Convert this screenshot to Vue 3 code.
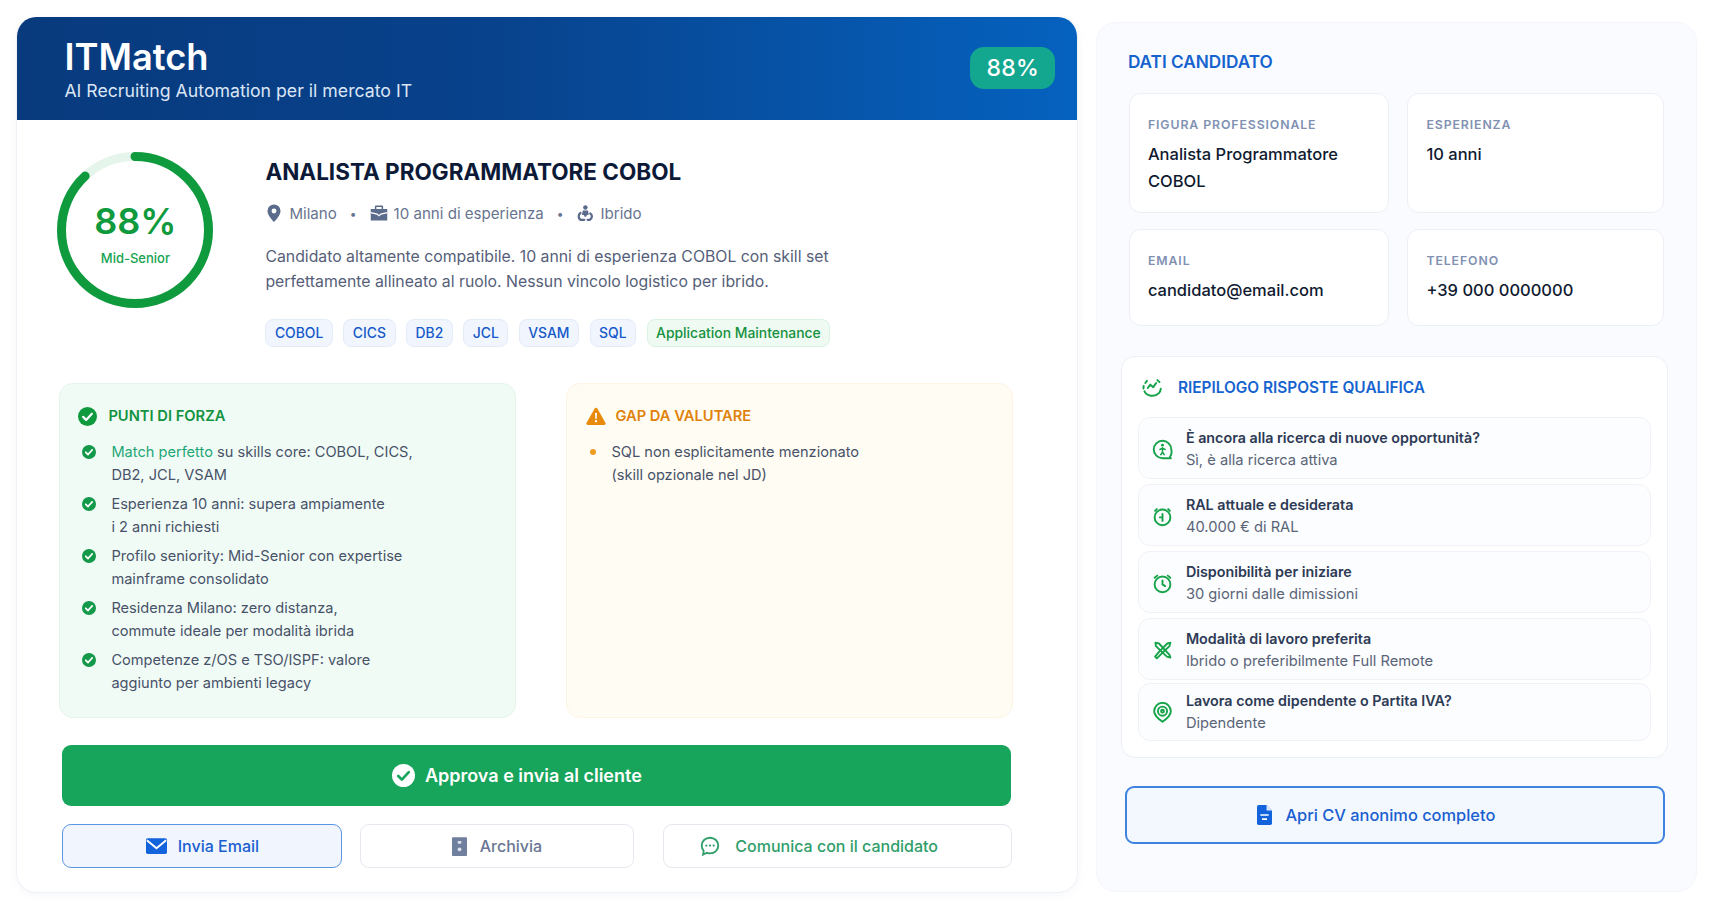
<script setup>
const tags = ['COBOL', 'CICS', 'DB2', 'JCL', 'VSAM', 'SQL']
const strengths = [
  { lead: 'Match perfetto', lines: [' su skills core: COBOL, CICS,', 'DB2, JCL, VSAM'] },
  { lead: '', lines: ['Esperienza 10 anni: supera ampiamente', 'i 2 anni richiesti'] },
  { lead: '', lines: ['Profilo seniority: Mid-Senior con expertise', 'mainframe consolidato'] },
  { lead: '', lines: ['Residenza Milano: zero distanza,', 'commute ideale per modalità ibrida'] },
  { lead: '', lines: ['Competenze z/OS e TSO/ISPF: valore', 'aggiunto per ambienti legacy'] }
]
const fields = [
  { label: 'FIGURA PROFESSIONALE', value: 'Analista Programmatore COBOL' },
  { label: 'ESPERIENZA', value: '10 anni' },
  { label: 'EMAIL', value: 'candidato@email.com' },
  { label: 'TELEFONO', value: '+39 000 0000000' }
]
const answers = [
  { icon: 'search', q: 'È ancora alla ricerca di nuove opportunità?', a: 'Sì, è alla ricerca attiva' },
  { icon: 'money', q: 'RAL attuale e desiderata', a: '40.000 € di RAL' },
  { icon: 'alarm', q: 'Disponibilità per iniziare', a: '30 giorni dalle dimissioni' },
  { icon: 'cross', q: 'Modalità di lavoro preferita', a: 'Ibrido o preferibilmente Full Remote' },
  { icon: 'target', q: 'Lavora come dipendente o Partita IVA?', a: 'Dipendente' }
]
</script>

<template>
  <div class="page">
    <section class="main">
      <header class="banner">
        <div>
          <h1 class="brand">ITMatch</h1>
          <p class="tagline">AI Recruiting Automation per il mercato IT</p>
        </div>
        <div class="badge">88%</div>
      </header>

      <div class="body">
        <div class="hero">
          <div class="ring">
            <svg viewBox="0 0 156 156" class="ring-svg">
              <circle cx="78" cy="78" r="73.500" fill="none" stroke="#e6f5ec" stroke-width="9" />
              <circle cx="78" cy="78" r="73.500" fill="none" stroke="#0f9a3e" stroke-width="9" stroke-linecap="round"
                stroke-dasharray="406.400 462" transform="rotate(-90 78 78)" />
            </svg>
            <div class="ring-text">
              <div class="ring-value">88%</div>
              <div class="ring-label">Mid-Senior</div>
            </div>
          </div>
          <div class="summary">
            <h2 class="role">ANALISTA PROGRAMMATORE COBOL</h2>
            <div class="meta">
              <svg class="meta-icon" viewBox="3 1 18 22"><path fill="#5a6b8c" fill-rule="evenodd" d="M12 1.500a8 8 0 0 0-8 8c0 5.600 8 13.500 8 13.500s8-7.900 8-13.500a8 8 0 0 0-8-8zm0 5a3 3 0 1 1 0 6 3 3 0 0 1 0-6z"/></svg>
              <span>Milano</span>
              <span class="dot">•</span>
              <svg class="meta-icon" viewBox="0 0 24 24"><path fill="#5a6b8c" d="M8 2h8a1.500 1.500 0 0 1 1.500 1.500V6.500H23v15.500H1V6.500h5.500V3.500A1.500 1.500 0 0 1 8 2zm.5 2v2.500h7V4z"/><path fill="none" stroke="#fff" stroke-width="1.700" d="M1 11.500l8.500 2 2.500 2 2.500-2 8.500-2"/></svg>
              <span>10 anni di esperienza</span>
              <span class="dot">•</span>
              <svg class="meta-icon" viewBox="0 0 24 24"><circle cx="12.500" cy="4.500" r="3" fill="#5a6b8c"/><path fill="#5a6b8c" d="M9 8.500h7l1 6h-2.500l-1 2.500h-2l-1-2.500H8z"/><path fill="none" stroke="#5a6b8c" stroke-width="3" stroke-linecap="round" d="M6 12c-3 2-3.500 6.500 0 9h5M19 12.500c3 2 3 6.500-.5 8.500h-3"/></svg>
              <span>Ibrido</span>
            </div>
            <p class="desc">Candidato altamente compatibile. 10 anni di esperienza COBOL con skill set<br>perfettamente allineato al ruolo. Nessun vincolo logistico per ibrido.</p>
            <div class="tags">
              <span v-for="t in tags" :key="t" class="tag">{{ t }}</span>
              <span class="tag tag-green">Application Maintenance</span>
            </div>
          </div>
        </div>

        <div class="panels">
          <div class="panel panel-green">
            <div class="panel-head head-green">
              <svg class="head-icon" viewBox="0 0 24 24"><circle cx="12" cy="12" r="12" fill="#0f9a3e"/><path d="M6.500 12.500l3.800 3.800 7.200-7.800" fill="none" stroke="#fff" stroke-width="2.800" stroke-linecap="round" stroke-linejoin="round"/></svg>
              PUNTI DI FORZA
            </div>
            <ul class="items">
              <li v-for="(s, i) in strengths" :key="i" class="item">
                <svg class="item-check" viewBox="0 0 24 24"><circle cx="12" cy="12" r="12" fill="#12994a"/><path d="M6.500 12.500l3.800 3.800 7.200-7.800" fill="none" stroke="#fff" stroke-width="3" stroke-linecap="round" stroke-linejoin="round"/></svg>
                <div><span v-if="s.lead" class="lead">{{ s.lead }}</span>{{ s.lines[0] }}<br>{{ s.lines[1] }}</div>
              </li>
            </ul>
          </div>
          <div class="panel panel-amber">
            <div class="panel-head head-amber">
              <svg class="warn-icon" viewBox="0 0 24 24"><path fill="#e88a0c" d="M12 2a1.800 1.800 0 0 1 1.600.900l9.700 17.200a1.800 1.800 0 0 1-1.600 2.700H2.300a1.800 1.800 0 0 1-1.600-2.700L10.400 2.900A1.800 1.800 0 0 1 12 2z"/><path fill="#fff" d="M10.800 8.500h2.400l-.4 7h-1.600z"/><circle cx="12" cy="18.300" r="1.400" fill="#fff"/></svg>
              GAP DA VALUTARE
            </div>
            <div class="gap-item">
              <span class="gap-dot"></span>
              <div>SQL non esplicitamente menzionato<br>(skill opzionale nel JD)</div>
            </div>
          </div>
        </div>

        <button class="approve">
          <svg class="approve-icon" viewBox="0 0 24 24"><circle cx="12" cy="12" r="12" fill="#fff"/><path d="M6.500 12.500l3.800 3.800 7.200-7.800" fill="none" stroke="#17a55c" stroke-width="2.800" stroke-linecap="round" stroke-linejoin="round"/></svg>
          Approva e invia al cliente
        </button>

        <div class="actions">
          <button class="action action-email">
            <svg class="mail-icon" viewBox="0 0 24 18"><rect width="24" height="18" rx="2" fill="#1263dc"/><path d="M1 2.500l11 9 11-9" fill="none" stroke="#fff" stroke-width="2.200"/></svg>
            Invia Email
          </button>
          <button class="action action-archive">
            <svg class="archive-icon" viewBox="0 0 16 20"><rect width="16" height="20" rx="1" fill="#6f7f9d"/><rect x="6" y="4" width="4" height="3" rx="1" fill="#dde3ee"/><circle cx="8" cy="13" r="2" fill="#dde3ee"/></svg>
            Archivia
          </button>
          <button class="action action-chat">
            <svg class="chat-icon" viewBox="0 0 24 24"><path d="M12 3c5.200 0 9 3.700 9 8.500S17.200 20 12 20c-1.300 0-2.500-.2-3.500-.6L4.500 21.500l.6-4.200C3.800 15.800 3 13.800 3 11.500 3 6.700 6.800 3 12 3z" fill="none" stroke="#2f9e6a" stroke-width="2"/><circle cx="8" cy="11.500" r="1.200" fill="#2f9e6a"/><circle cx="12" cy="11.500" r="1.200" fill="#2f9e6a"/><circle cx="16" cy="11.500" r="1.200" fill="#2f9e6a"/></svg>
            Comunica con il candidato
          </button>
        </div>
      </div>
    </section>

    <aside class="side">
      <h3 class="side-title">DATI CANDIDATO</h3>
      <div class="fields">
        <div v-for="f in fields" :key="f.label" class="field">
          <div class="field-label">{{ f.label }}</div>
          <div class="field-value">{{ f.value }}</div>
        </div>
      </div>

      <div class="summary-box">
        <div class="summary-head">
          <svg class="summary-icon" viewBox="0 0 24 24" fill="none" stroke="#16a34a" stroke-width="2.400" stroke-linecap="round" stroke-linejoin="round"><path d="M2 9.500l-.3 3M3 16c2.500 5.500 12 7.500 17 2.500 1.500-1.500 2.300-3.500 2.500-5.500"/><path d="M7 12l3-4 3.500 3L17 6"/><path d="M18.500 2.500l2.500 2.500M4 6l2-2.500"/></svg>
          <span>RIEPILOGO RISPOSTE QUALIFICA</span>
        </div>
        <div class="answers">
          <div v-for="a in answers" :key="a.q" class="answer">
            <svg class="answer-icon" viewBox="0 0 24 24" fill="none" stroke="#16a34a" stroke-width="2.200" stroke-linecap="round" stroke-linejoin="round">
              <template v-if="a.icon === 'search'">
                <path d="M20.500 20.500l1 1.500h-9.500a10 10 0 1 1 10-10 10 10 0 0 1-1.500 8.500z"/>
                <circle cx="12" cy="7" r="1.700" fill="#16a34a" stroke="none"/>
                <path d="M12 10v5M9 12l3-1.500 3 1.500M10 18l2-3 2 3" stroke-width="1.700"/>
              </template>
              <template v-else-if="a.icon === 'money'">
                <circle cx="12" cy="13" r="9"/>
                <path d="M12 9v8M9 13h3M3.500 5.500l2-2M20.500 5.500l-2-2"/>
              </template>
              <template v-else-if="a.icon === 'alarm'">
                <circle cx="12" cy="13" r="9"/>
                <path d="M12 8.500V13l3 2M3 5.500L6 3M21 5.500L18 3"/>
              </template>
              <template v-else-if="a.icon === 'cross'">
                <path d="M4 3l4 1 12 13 1 3-4-1L4.500 7z"/>
                <path d="M21 3l-3.500 1L8.500 13l-5 6 2 2 5.500-5.500L20 7z"/>
              </template>
              <template v-else>
                <path d="M12 22.500s-9.500-6.500-9.500-12a9.500 9.500 0 0 1 19 0c0 5.500-9.500 12-9.500 12z"/>
                <circle cx="12" cy="10.500" r="5.200"/>
                <circle cx="12" cy="10.500" r="1.600"/>
              </template>
            </svg>
            <div>
              <div class="answer-q">{{ a.q }}</div>
              <div class="answer-a">{{ a.a }}</div>
            </div>
          </div>
        </div>
      </div>

      <button class="cv">
        <svg class="cv-icon" viewBox="0 0 18 24"><path fill="#1263dc" d="M2 0h9.500L18 6.500V22a2 2 0 0 1-2 2H2a2 2 0 0 1-2-2V2a2 2 0 0 1 2-2z"/><path fill="#fff" d="M11.500 0v6.500H18z" opacity=".85"/><path stroke="#fff" stroke-width="2" d="M4 12h10M6 17h6"/></svg>
        Apri CV anonimo completo
      </button>
    </aside>
  </div>
</template>

<style scoped>
.page {
  width: 1717px;
  height: 916px;
  box-sizing: border-box;
  padding: 17px 0 23.500px 16.400px;
  display: flex;
  gap: 17.500px;
  font-family: Inter, "Liberation Sans", sans-serif;
  background: #fff;
  overflow: hidden;
}
h1, h2, h3, p, ul { margin: 0; padding: 0; }
ul { list-style: none; }
button { font-family: inherit; cursor: pointer; }

.main {
  width: 1062px;
  flex: none;
  box-sizing: border-box;
  border: 1px solid #eef1f6;
  border-top: 0;
  border-radius: 20px;
  background: #fff;
  box-shadow: 0 2px 10px rgba(30, 60, 120, 0.04);
  overflow: hidden;
}
.banner {
  height: 103px;
  box-sizing: border-box;
  padding: 20px 22px 0 47px;
  background: linear-gradient(90deg, #083a7d 0%, #08428c 45%, #0562bf 100%);
  color: #fff;
  display: flex;
  justify-content: space-between;
  align-items: flex-start;
}
.brand { font-size: 36.300px; line-height: 40px; font-weight: 600; letter-spacing: 0; }
.tagline { font-size: 17.700px; line-height: 24px; color: #dbe6f5; margin-top: 2px; }
.badge {
  margin-top: 10px;
  width: 85px;
  height: 42px;
  border-radius: 14px;
  background: #12a78e;
  display: flex;
  align-items: center;
  justify-content: center;
  font-size: 23px;
  font-weight: 500;
  letter-spacing: 0.3px;
}

.body { padding: 32px 0 0 40px; }
.hero { display: flex; gap: 52px; }
.ring { position: relative; width: 156px; height: 156px; flex: none; }
.ring-svg { width: 156px; height: 156px; display: block; }
.ring-text {
  position: absolute;
  inset: 0;
  box-sizing: border-box;
  padding-top: 8px;
  display: flex;
  flex-direction: column;
  align-items: center;
  justify-content: center;
}
.ring-value { font-size: 36px; line-height: 40px; font-weight: 600; color: #0f9a3e; }
.ring-label { font-size: 13px; line-height: 18px; font-weight: 500; color: #15a34f; margin-top: 8px; }

.summary { padding-top: 5px; }
.role { font-size: 22.500px; line-height: 30px; font-weight: 700; color: #0c1a38; }
.meta {
  display: flex;
  align-items: center;
  margin-top: 14px;
  height: 24px;
  font-size: 15.100px;
  color: #67748f;
  gap: 6px;
}
.meta-icon { width: 18px; height: 18px; flex: none; }
.dot { margin: 0 7px; font-size: 12px; color: #67748f; }
.desc { margin-top: 19px; font-size: 15.800px; line-height: 25.200px; color: #556078; }
.tags { display: flex; gap: 10.500px; margin-top: 25px; }
.tag {
  height: 28px;
  box-sizing: border-box;
  padding: 0 8.500px;
  display: flex;
  align-items: center;
  border: 1px solid #e4ecf8;
  border-radius: 8px;
  background: #f1f6fe;
  color: #1659c9;
  font-size: 13.900px;
  font-weight: 500;
}
.tag-green { background: #eefaf2; border-color: #dcf3e3; color: #15913f; }

.panels {
  display: grid;
  grid-template-columns: 457px 447px;
  gap: 50px;
  margin: 36px 0 0 2px;
}
.panel { height: 335px; box-sizing: border-box; border-radius: 14px; padding: 22px 0 0 18px; }
.panel-green { background: #f1fbf6; border: 1px solid #e3f5ea; }
.panel-amber { background: #fffcf3; border: 1px solid #fdf5e4; padding-left: 19px; }
.panel-head {
  display: flex;
  align-items: center;
  font-size: 14.700px;
  line-height: 20px;
  font-weight: 600;
}
.head-green { color: #12933f; gap: 11px; }
.head-amber { color: #e0820c; gap: 9px; }
.head-icon { width: 19px; height: 19px; }
.warn-icon { width: 20px; height: 20px; }
.items { margin-top: 15px; padding-left: 4px; }
.item {
  display: flex;
  gap: 15px;
  font-size: 14.600px;
  line-height: 22.600px;
  color: #475268;
  margin-bottom: 6.800px;
}
.item-check { width: 14px; height: 14px; flex: none; margin-top: 4px; }
.lead { color: #1fa777; }
.gap-item {
  display: flex;
  gap: 15px;
  margin-top: 15px;
  font-size: 14.600px;
  line-height: 22.600px;
  color: #475268;
}
.gap-dot { width: 6px; height: 6px; border-radius: 50%; background: #ee9c20; margin-top: 8px; margin-left: 4px; flex: none; }

.approve {
  display: flex;
  align-items: center;
  justify-content: center;
  gap: 10px;
  width: 949px;
  height: 60.500px;
  box-sizing: border-box;
  padding: 0 40px 0 0;
  margin: 27px 0 0 5px;
  border: 0;
  border-radius: 9px;
  background: #17a55c;
  color: #fff;
  font-size: 18px;
  font-weight: 600;
}
.approve-icon { width: 23px; height: 23px; }
.actions {
  display: flex;
  gap: 18px;
  margin: 18.500px 0 0 5px;
  width: 949px;
}
.action {
  height: 44px;
  box-sizing: border-box;
  display: flex;
  align-items: center;
  justify-content: center;
  gap: 13px;
  border-radius: 9px;
  font-size: 16px;
  font-weight: 500;
  background: #fff;
  border: 1.500px solid #e5e8ef;
  flex: none;
}
.action-email { width: 280px; background: #f1f6fe; border-color: #5b95e6; color: #1a5fd0; gap: 11px; }
.action-archive { width: 274px; color: #6a7694; padding-left: 5px; }
.action-chat { width: 348.500px; margin-left: 11px; color: #2f9e6a; padding: 0 38px 0 0; gap: 14px; }
.mail-icon { width: 21px; height: 16px; }
.archive-icon { width: 15px; height: 19px; }
.chat-icon { width: 22px; height: 22px; }

.side {
  width: 601px;
  height: 869.500px;
  margin-top: 5px;
  box-sizing: border-box;
  flex: none;
  background: #f9fbfe;
  border-radius: 20px;
  border: 1px solid #f4f6fb;
  padding: 28px 0 0 23px;
}
.side-title { margin-left: 8px; font-size: 17.200px; line-height: 22px; font-weight: 600; color: #1663cf; }
.fields {
  display: grid;
  grid-template-columns: 260px 257px;
  grid-template-rows: 120px 97px;
  gap: 16px 18.500px;
  margin: 20px 0 0 9px;
}
.field {
  background: #fff;
  border: 1px solid #eceff5;
  border-radius: 12px;
  padding: 23px 18px 0;
}
.field-label { font-size: 12.300px; line-height: 16px; font-weight: 600; letter-spacing: 0.9px; color: #8191b2; }
.field-value { font-size: 16.500px; line-height: 26.500px; font-weight: 500; color: #101a30; margin-top: 8px; }

.summary-box {
  width: 547px;
  height: 402px;
  box-sizing: border-box;
  background: #fff;
  border: 1px solid #eceff5;
  border-radius: 14px;
  margin: 30px 0 0 1px;
  padding: 20px 16px 0 16px;
}
.summary-head {
  display: flex;
  align-items: center;
  gap: 16px;
  font-size: 15.400px;
  line-height: 22px;
  font-weight: 600;
  color: #1663cf;
}
.summary-icon { width: 20px; height: 20px; margin-left: 4px; }
.answers { margin-top: 18px; display: flex; flex-direction: column; gap: 5px; }
.answer {
  height: 62px;
  box-sizing: border-box;
  border: 1px solid #f0f2f7;
  border-radius: 12px;
  background: #fcfdfe;
  display: flex;
  align-items: center;
  gap: 13px;
  padding: 2px 0 0 13px;
  flex: none;
}
.answer:last-child { height: 58px; margin-top: -2px; padding-top: 0; }
.answer-icon { width: 21px; height: 21px; flex: none; }
.answer-q { font-size: 14.300px; line-height: 22px; font-weight: 600; color: #2d3a55; }
.answer-a { font-size: 14.700px; line-height: 22px; color: #5a6478; }

.cv {
  display: flex;
  align-items: center;
  justify-content: center;
  gap: 13px;
  width: 540px;
  height: 58px;
  box-sizing: border-box;
  padding: 0 37px 0 0;
  margin: 28px 0 0 5px;
  background: #f3f8ff;
  border: 2px solid #3f82e0;
  border-radius: 9px;
  color: #1a5fd0;
  font-size: 16.400px;
  font-weight: 500;
}
.cv-icon { width: 15px; height: 20px; }
</style>

<style>
html, body { background: #fff; }
</style>
